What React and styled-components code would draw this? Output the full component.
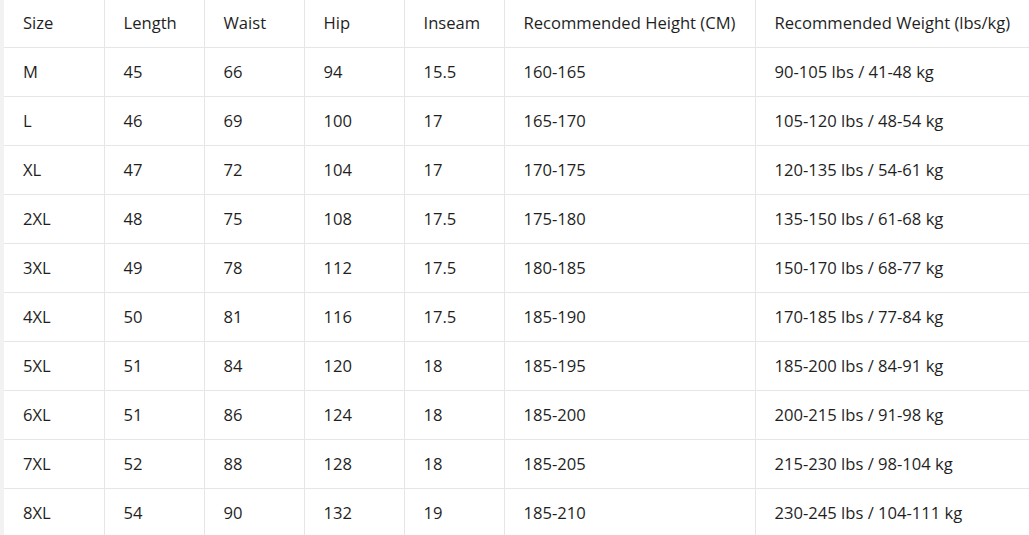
import React from 'react';
import styled, { createGlobalStyle } from 'styled-components';

const GlobalStyle = createGlobalStyle`
  html, body { margin: 0; padding: 0; background: #fff; }
  body { font-family: "Open Sans", "Noto Sans", sans-serif; color: #1f1f1f; }
`;

const Page = styled.div`
  display: flex;
  width: 1029px;
  height: 535px;
  overflow: hidden;
`;

const Edge = styled.div`
  flex: 0 0 4px;
  background: #f2f2f2;
`;

const Table = styled.table`
  border-collapse: collapse;
  table-layout: fixed;
  width: 1040px;
  margin-top: -1px;
  flex: 0 0 auto;
`;

const Cell = styled.td`
  height: 48px;
  padding: 0 0 0 19px;
  border-right: 1px solid #e6e6e6;
  border-bottom: 1px solid #e6e6e6;
  font-size: 16.6px;
  line-height: 20px;
  white-space: nowrap;
  text-align: left;
  font-weight: 400;
  vertical-align: middle;
`;

const HeadCell = styled(Cell).attrs({ as: 'th' })`
  height: 48px;
`;

const columns = [
  { label: 'Size', width: 100 },
  { label: 'Length', width: 100 },
  { label: 'Waist', width: 100 },
  { label: 'Hip', width: 100 },
  { label: 'Inseam', width: 100 },
  { label: 'Recommended Height (CM)', width: 251 },
  { label: 'Recommended Weight (lbs/kg)', width: 289 },
];

const rows = [
  ['M', '45', '66', '94', '15.5', '160-165', '90-105 lbs / 41-48 kg'],
  ['L', '46', '69', '100', '17', '165-170', '105-120 lbs / 48-54 kg'],
  ['XL', '47', '72', '104', '17', '170-175', '120-135 lbs / 54-61 kg'],
  ['2XL', '48', '75', '108', '17.5', '175-180', '135-150 lbs / 61-68 kg'],
  ['3XL', '49', '78', '112', '17.5', '180-185', '150-170 lbs / 68-77 kg'],
  ['4XL', '50', '81', '116', '17.5', '185-190', '170-185 lbs / 77-84 kg'],
  ['5XL', '51', '84', '120', '18', '185-195', '185-200 lbs / 84-91 kg'],
  ['6XL', '51', '86', '124', '18', '185-200', '200-215 lbs / 91-98 kg'],
  ['7XL', '52', '88', '128', '18', '185-205', '215-230 lbs / 98-104 kg'],
  ['8XL', '54', '90', '132', '19', '185-210', '230-245 lbs / 104-111 kg'],
];

export default function App() {
  return (
    <>
      <GlobalStyle />
      <Page>
        <Edge />
        <Table>
          <colgroup>
            {columns.map((c) => (
              <col key={c.label} style={{ width: c.width }} />
            ))}
          </colgroup>
          <thead>
            <tr>
              {columns.map((c) => (
                <HeadCell key={c.label}>{c.label}</HeadCell>
              ))}
            </tr>
          </thead>
          <tbody>
            {rows.map((r) => (
              <tr key={r[0]}>
                {r.map((v, i) => (
                  <Cell key={i}>{v}</Cell>
                ))}
              </tr>
            ))}
          </tbody>
        </Table>
      </Page>
    </>
  );
}
